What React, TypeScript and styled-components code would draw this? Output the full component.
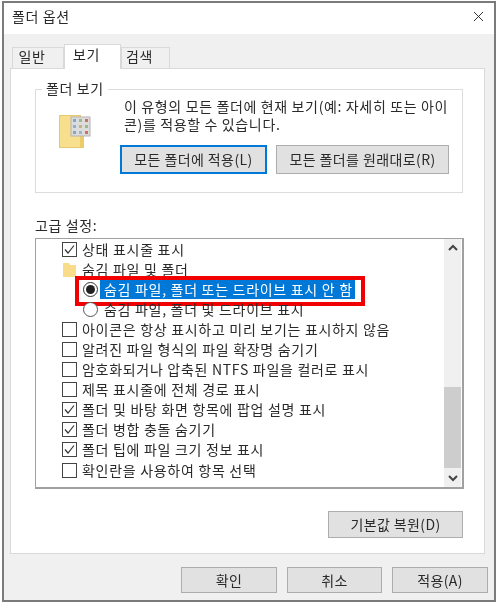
import React from 'react'
import styled, { createGlobalStyle } from 'styled-components'
import { X } from 'lucide-react'

const rows = [
  { kind: 'check', on: true, label: '상태 표시줄 표시' },
  { kind: 'folder', label: '숨김 파일 및 폴더' },
  { kind: 'radio', on: true, label: '숨김 파일, 폴더 또는 드라이브 표시 안 함' },
  { kind: 'radio', on: false, label: '숨김 파일, 폴더 및 드라이브 표시' },
  { kind: 'check', on: false, label: '아이콘은 항상 표시하고 미리 보기는 표시하지 않음' },
  { kind: 'check', on: false, label: '알려진 파일 형식의 파일 확장명 숨기기' },
  { kind: 'check', on: false, label: '암호화되거나 압축된 NTFS 파일을 컬러로 표시' },
  { kind: 'check', on: false, label: '제목 표시줄에 전체 경로 표시' },
  { kind: 'check', on: true, label: '폴더 및 바탕 화면 항목에 팝업 설명 표시' },
  { kind: 'check', on: true, label: '폴더 병합 충돌 숨기기' },
  { kind: 'check', on: true, label: '폴더 팁에 파일 크기 정보 표시' },
  { kind: 'check', on: false, label: '확인란을 사용하여 항목 선택' },
]

const cellColors = ['#7fa8c8', '#9fb890', '#d0705c', '#8fb0c8', '#c0b480', '#a4b490', '#7fa8c8', '#9fb4c8', '#d0705c']

const App = () => {
  return (
    <Window>
      <GlobalStyle />
      <TitleBar>
        <Title>폴더 옵션</Title>
        <X size={17} strokeWidth={1.3} color="#222" />
      </TitleBar>
      <Body>
        <Tabs>
          <Tab $w={52}>일반</Tab>
          <Tab $w={57} $active>보기</Tab>
          <Tab $w={49}>검색</Tab>
        </Tabs>
        <Panel>
          <Group>
            <Legend>폴더 보기</Legend>
            <ViewIcon>
              <svg width="32" height="34" viewBox="0 0 32 34">
                <rect x="0.5" y="0.5" width="21" height="32" fill="#f8df8e" stroke="#e6c96e" />
                <rect x="21" y="3" width="4" height="30" fill="#eecb6a" />
                <rect x="12" y="2" width="19" height="19" fill="#dcdcdc" stroke="#b4b4b4" />
                {cellColors.map((c, i) => (
                  <rect key={i} x={14 + (i % 3) * 6} y={4 + Math.floor(i / 3) * 6} width="3" height="3" fill={c} />
                ))}
              </svg>
            </ViewIcon>
            <GroupRight>
              <Desc>
                이 유형의 모든 폴더에 현재 보기(예: 자세히 또는 아이
                <br />
                콘)를 적용할 수 있습니다.
              </Desc>
              <GroupButtons>
                <Button $w={147} $h={29} $focus>모든 폴더에 적용(L)</Button>
                <Button $w={173} $h={29}>모든 폴더를 원래대로(R)</Button>
              </GroupButtons>
            </GroupRight>
          </Group>
          <Label>고급 설정:</Label>
          <ListBox>
            <List>
              {rows.map((r, i) => (
                <Row key={i} $indent={r.kind === 'radio'}>
                  {r.kind === 'check' && (
                    <CheckBox>
                      {r.on && (
                        <svg width="13" height="13" viewBox="0 0 13 13">
                          <path d="M2 6.5 L5 10 L11 2.5" fill="none" stroke="#333" strokeWidth="1.2" />
                        </svg>
                      )}
                    </CheckBox>
                  )}
                  {r.kind === 'folder' && (
                    <svg width="15" height="15" viewBox="0 0 15 15">
                      <path d="M1 1 H7 L8 3 H14 V15 H1 Z" fill="#f8dc8a" />
                    </svg>
                  )}
                  {r.kind === 'radio' && <Radio $on={r.on} />}
                  <RowText $radio={r.kind === 'radio'} $selected={r.kind === 'radio' && r.on}>{r.label}</RowText>
                  {r.kind === 'radio' && r.on && <RedBox />}
                </Row>
              ))}
            </List>
            <ScrollBar>
              <ScrollArrow>
                <svg width="10" height="7" viewBox="0 0 10 7">
                  <path d="M1 6 L5 2 L9 6" fill="none" stroke="#444" strokeWidth="2" />
                </svg>
              </ScrollArrow>
              <Track>
                <Thumb />
              </Track>
              <ScrollArrow>
                <svg width="10" height="7" viewBox="0 0 10 7">
                  <path d="M1 1 L5 5 L9 1" fill="none" stroke="#444" strokeWidth="2" />
                </svg>
              </ScrollArrow>
            </ScrollBar>
          </ListBox>
          <ResetRow>
            <Button $w={135} $h={27}>기본값 복원(D)</Button>
          </ResetRow>
        </Panel>
        <Footer>
          <Button $w={96} $h={26}>확인</Button>
          <Button $w={95} $h={26}>취소</Button>
          <Button $w={96} $h={26}>적용(A)</Button>
        </Footer>
      </Body>
    </Window>
  )
}

export default App

const GlobalStyle = createGlobalStyle`
html, body {
  margin: 0;
  padding: 0;
  background: #fff;
}
body {
  font-family: "Noto Sans CJK KR", "Liberation Sans", sans-serif;
  font-size: 14px;
  color: #2a2a2a;
}
`

const Window = styled.div`
box-sizing: border-box;
width: 494px;
height: 601px;
margin: 1px 0 0 2px;
border: 2px solid #7b7b7b;
background: #f0f0f0;
display: flex;
flex-direction: column;
filter: blur(0.35px);
`

const TitleBar = styled.div`
height: 31px;
flex: none;
background: #fff;
display: flex;
align-items: center;
justify-content: space-between;
padding: 0 7px 5px 8px;
box-sizing: border-box;
`

const Title = styled.div`
font-size: 14px;
letter-spacing: 0.6px;
`

const Body = styled.div`
flex: 1;
padding: 10px 6px 7px 6px;
display: flex;
flex-direction: column;
`

const Tabs = styled.div`
display: flex;
align-items: flex-end;
height: 25px;
padding-left: 2px;
margin-bottom: -1px;
position: relative;
z-index: 1;
`

const Tab = styled.div<{ $active?: boolean; $w: number }>`
box-sizing: border-box;
width: ${p => p.$w}px;
height: ${p => (p.$active ? 25 : 22)}px;
border: 1px solid #d9d9d9;
border-bottom: ${p => (p.$active ? 'none' : '1px solid #d9d9d9')};
background: ${p => (p.$active ? '#fff' : '#f0f0f0')};
display: flex;
align-items: center;
justify-content: center;
padding: 0 12px ${p => (p.$active ? 7 : 4)}px 0;
font-size: 14px;
letter-spacing: 0.5px;
`

const Panel = styled.div`
box-sizing: border-box;
width: 475px;
height: 486px;
border: 1px solid #d9d9d9;
background: #fff;
padding: 20px 21px 0 24px;
display: flex;
flex-direction: column;
`

const Group = styled.div`
box-sizing: border-box;
width: 428px;
height: 104px;
border: 1px solid #dcdcdc;
position: relative;
display: flex;
flex: none;
`

const Legend = styled.div`
position: absolute;
top: -12px;
left: 6px;
padding: 0 4px;
background: #fff;
font-size: 14px;
letter-spacing: 0.6px;
line-height: 20px;
`

const ViewIcon = styled.div`
width: 84px;
flex: none;
padding: 25px 0 0 23px;
box-sizing: border-box;
`

const GroupRight = styled.div`
display: flex;
flex-direction: column;
`

const Desc = styled.div`
margin: 7px 0 0 4px;
line-height: 18px;
font-size: 14px;
white-space: nowrap;
letter-spacing: 0.64px;
`

const GroupButtons = styled.div`
display: flex;
gap: 9px;
margin-top: 12px;
`

const Button = styled.div<{ $w: number; $h: number; $focus?: boolean }>`
box-sizing: border-box;
width: ${p => p.$w}px;
height: ${p => p.$h}px;
flex: none;
display: flex;
align-items: center;
justify-content: center;
padding-bottom: 1px;
background: #e1e1e1;
border: ${p => (p.$focus ? '2px solid #0078d7' : '1px solid #adadad')};
font-size: 14px;
letter-spacing: 0.4px;
white-space: nowrap;
`

const Label = styled.div`
margin-top: 24px;
line-height: 16px;
height: 21px;
font-size: 14px;
letter-spacing: 0.6px;
`

const ListBox = styled.div`
box-sizing: border-box;
width: 429px;
height: 251px;
flex: none;
border: 1px solid #a0a0a0;
border-bottom-width: 2px;
border-right-width: 2px;
background: #fff;
display: flex;
`

const List = styled.div`
flex: 1;
`

const Row = styled.div<{ $indent?: boolean }>`
height: 20.1px;
display: flex;
align-items: center;
gap: 5px;
padding-left: ${p => (p.$indent ? 47 : 26)}px;
position: relative;
white-space: nowrap;
`

const CheckBox = styled.div`
box-sizing: border-box;
width: 15px;
height: 15px;
flex: none;
border: 1px solid #444;
background: #fff;
display: flex;
align-items: center;
justify-content: center;
`

const Radio = styled.div<{ $on?: boolean }>`
box-sizing: border-box;
width: 15px;
height: 15px;
flex: none;
border: 1px solid ${p => (p.$on ? '#333' : '#555')};
border-radius: 50%;
background: #fff;
display: flex;
align-items: center;
justify-content: center;
margin-right: -2px;
&::after {
  content: "";
  display: ${p => (p.$on ? 'block' : 'none')};
  width: 9px;
  height: 9px;
  border-radius: 50%;
  background: #222;
}
`

const RowText = styled.span<{ $selected?: boolean; $radio?: boolean }>`
font-size: 14px;
letter-spacing: 0.7px;
line-height: 19px;
padding: ${p => (p.$selected ? '0 2px 0 4px' : '0')};
margin-left: ${p => (p.$selected ? -1 : p.$radio ? 3 : 0)}px;
background: ${p => (p.$selected ? '#0078d7' : 'transparent')};
color: ${p => (p.$selected ? '#fff' : '#2a2a2a')};
`

const RedBox = styled.div`
position: absolute;
box-sizing: border-box;
left: 39px;
top: -3px;
width: 290px;
height: 30px;
border: 4px solid #f00000;
`

const ScrollBar = styled.div`
width: 17px;
flex: none;
margin-right: 1px;
background: #f0f0f0;
display: flex;
flex-direction: column;
`

const ScrollArrow = styled.div`
height: 17px;
flex: none;
display: flex;
align-items: center;
justify-content: center;
`

const Track = styled.div`
flex: 1;
display: flex;
flex-direction: column;
justify-content: flex-end;
padding-bottom: 2px;
`

const Thumb = styled.div`
height: 81px;
background: #cdcdcd;
`

const ResetRow = styled.div`
display: flex;
justify-content: flex-end;
margin-top: 22px;
width: 429px;
padding-right: 1px;
box-sizing: border-box;
`

const Footer = styled.div`
display: flex;
justify-content: flex-end;
gap: 10px;
margin-top: 13px;
`
